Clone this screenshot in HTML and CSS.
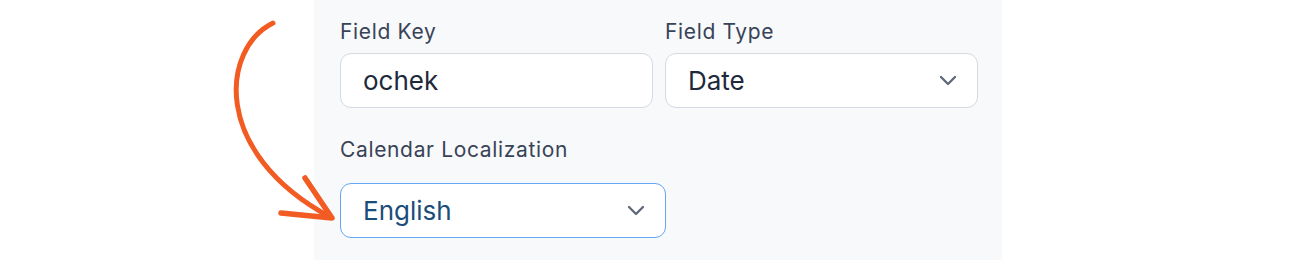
FILE: index.html
```html
<!DOCTYPE html>
<html lang="en">
<head>
<meta charset="utf-8">
<title>Field settings</title>
<link rel="stylesheet" href="styles.css">
</head>
<body>
<div class="stage">
  <div class="gutter">
    <svg class="arrow" width="120" height="240" viewBox="220 0 120 240" aria-hidden="true">
      <path d="M273 23 C 222 48, 210 152, 330 217" fill="none" stroke="#f25c22" stroke-width="5" stroke-linecap="round"/>
      <path d="M305 178 L332 218 L281 213" fill="none" stroke="#f25c22" stroke-width="5.5" stroke-linecap="round" stroke-linejoin="round"/>
    </svg>
  </div>
  <div class="panel">
    <div class="row">
      <div class="field">
        <label class="label">Field Key</label>
        <div class="control">ochek</div>
      </div>
      <div class="field">
        <label class="label">Field Type</label>
        <div class="control select">
          <span>Date</span>
          <svg class="chev" width="18" height="11" viewBox="0 0 18 11"><path d="M2 2 L9 9 L16 2" fill="none" stroke="#5f6878" stroke-width="2.3" stroke-linecap="round" stroke-linejoin="round"/></svg>
        </div>
      </div>
    </div>
    <div class="field loc">
      <label class="label">Calendar Localization</label>
      <div class="control select active">
        <span>English</span>
        <svg class="chev" width="18" height="11" viewBox="0 0 18 11"><path d="M2 2 L9 9 L16 2" fill="none" stroke="#5f6878" stroke-width="2.3" stroke-linecap="round" stroke-linejoin="round"/></svg>
      </div>
    </div>
  </div>
</div>
</body>
</html>
```
FILE: styles.css
```css
html, body {
  margin: 0;
  padding: 0;
  background: #ffffff;
  font-family: Inter, "Noto Sans", sans-serif;
}
.stage {
  display: flex;
  height: 260px;
  width: 1300px;
}
.gutter {
  position: relative;
  width: 314px;
  flex: none;
}
.arrow {
  position: absolute;
  left: 220px;
  top: 0;
  overflow: visible;
}
.panel {
  width: 662px;
  flex: none;
  background: #f8f9fb;
  padding: 20px 0 0 26px;
  box-sizing: content-box;
}
.row {
  display: grid;
  grid-template-columns: 313px 313px;
  column-gap: 12px;
}
.field {
  display: flex;
  flex-direction: column;
}
.label {
  font-size: 21px;
  line-height: 24px;
  letter-spacing: 0.65px;
  color: #394357;
  margin-bottom: 9px;
}
.control {
  box-sizing: border-box;
  height: 55px;
  border: 1px solid #d5d9e1;
  border-radius: 11px;
  background: #ffffff;
  display: flex;
  align-items: center;
  padding: 0 30px 0 22px;
  font-size: 26px;
  color: #1e293b;
}
.select {
  justify-content: space-between;
}
.loc {
  width: 326px;
  margin-top: 30px;
}
.loc .label {
  margin-bottom: 21px;
}
.active {
  border-color: #64a6f4;
  color: #1b4d7b;
}
.chev {
  display: block;
  margin-right: -10px;
}
```
